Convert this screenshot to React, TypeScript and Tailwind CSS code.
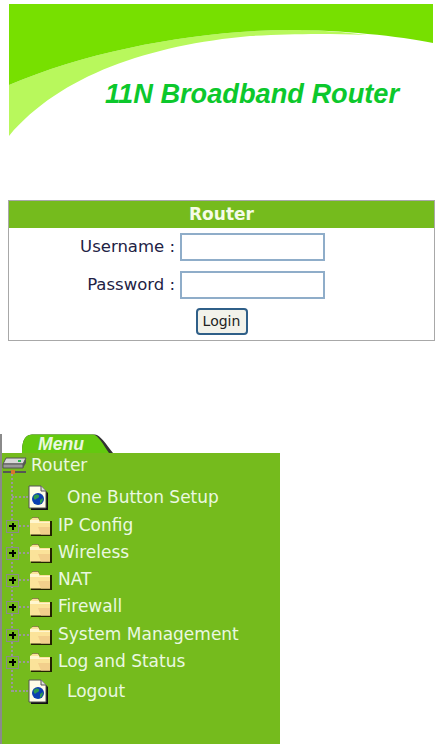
const font = "font-['DejaVu_Sans','Liberation_Sans',sans-serif]";

function Banner() {
  return (
    <div className="relative ml-[9px] mt-[4px] h-[132px] w-[424px]">
      <svg viewBox="9 4 424 132" className="block h-full w-full">
        <path d="M9 85C90 50 200 30 290 30C320 30 345 32 367 35C320 33 290 34 250 36C150 45 60 75 9 136Z" fill="#b8f85c" />
        <path d="M9 4H433V43C400 36 340 30 290 30C200 30 90 50 9 85Z" fill="#77e000" />
      </svg>
      <span className="absolute left-[96px] top-[73px] whitespace-nowrap font-['Liberation_Sans',sans-serif] text-[27.2px] font-bold italic leading-[34px] text-[#0cc82c]">
        11N Broadband Router
      </span>
    </div>
  );
}

function LoginBox() {
  return (
    <div className={`ml-[8px] mt-[64px] h-[141px] w-[427px] border border-[#a8a8a8] bg-white ${font}`}>
      <div className="flex h-[27px] items-center justify-center bg-[#75bb1d] text-[17px] font-bold text-[#f4fbe8]">
        Router
      </div>
      <div className="mt-[5px] flex items-center">
        <label className="w-[166px] text-right text-[16.5px] text-[#222244]">Username :</label>
        <input className="ml-[5px] h-[28px] w-[145px] border-2 border-[#8fadc9] bg-white" />
      </div>
      <div className="mt-[10px] flex items-center">
        <label className="w-[166px] text-right text-[16.5px] text-[#222244]">Password :</label>
        <input className="ml-[5px] h-[28px] w-[145px] border-2 border-[#8fadc9] bg-white" />
      </div>
      <div className="mt-[9px] flex justify-center">
        <button className="flex h-[27px] w-[52px] items-center justify-center rounded-[4px] border-2 border-[#2f5f88] bg-[#f2f2ea] text-[14px] text-[#222222]">
          Login
        </button>
      </div>
    </div>
  );
}

function Folder() {
  return (
    <svg width="23" height="21" viewBox="0 0 23 21" className="shrink-0">
      <path d="M2 20H23V5H11L9 1H4L2 4Z" fill="#222200" />
      <path d="M1 18.5H21V5H11L9 1.5H4L1 4Z" fill="#fbe39a" />
      <path d="M1 4H10V6H21V7H1Z" fill="#fff6cf" />
      <path d="M9 11H21V18.5H12Z" fill="#f2cf8c" />
    </svg>
  );
}

function PageIcon() {
  return (
    <svg width="21" height="25" viewBox="0 0 21 25" className="shrink-0">
      <path d="M3 3H15L20 8V25H3Z" fill="#111111" />
      <path d="M1 1H13L18 6V23H1Z" fill="#fffde8" stroke="#555555" />
      <path d="M13 1V6H18" fill="#dddddd" stroke="#555555" />
      <circle cx="10" cy="14" r="6" fill="#0b3fb0" />
      <path d="M7 10C10 9 12 10 11 12C10 14 8 13 7 15C5 13 5 11 7 10ZM12 15L15 13C15 16 14 18 12 19Z" fill="#2f9a50" />
    </svg>
  );
}

function Plus() {
  return (
    <span className="relative flex h-[13px] w-[13px] shrink-0 items-center justify-center border border-[#8a8a8a] bg-[#75bb1d]">
      <span className="absolute h-[2px] w-[7px] bg-black" />
      <span className="absolute h-[7px] w-[2px] bg-black" />
    </span>
  );
}

function FolderRow({ label, mt }: { label: string; mt: string }) {
  return (
    <div className={`flex h-[22px] items-center ${mt}`}>
      <div className="ml-[4px]">
        <Plus />
      </div>
      <div className="w-[10px] border-t-2 border-dotted border-[#9a9a98]" />
      <Folder />
      <span className="ml-[6px] whitespace-nowrap text-[17px] text-[#eaf8e0]">{label}</span>
    </div>
  );
}

function PageRow({ label, mt }: { label: string; mt: string }) {
  return (
    <div className={`flex h-[26px] items-center ${mt}`}>
      <div className="ml-[10px] w-[16px] border-t-2 border-dotted border-[#9a9a98]" />
      <PageIcon />
      <span className="ml-[18px] whitespace-nowrap pt-[1px] text-[17px] text-[#eaf8e0]">{label}</span>
    </div>
  );
}

function Menu() {
  return (
    <div className={`mt-[93px] w-[280px] ${font}`}>
      <div className="relative h-[19px] border-l-2 border-[#8a8a8a]">
        <svg width="92" height="19" viewBox="0 0 92 19" className="absolute left-[20px] top-0">
          <path d="M0 19C0 8 2 1 10 0.5H73C78 1 84 10 91 19Z" fill="#333333" />
          <path d="M0 19C0 8 2 1 10 0.5H71C76 1 81 10 87 19Z" fill="#63c90f" />
        </svg>
        <span className="absolute left-[36px] top-[-1px] font-['Liberation_Sans',sans-serif] text-[17.6px] font-bold italic leading-[22px] text-[#eaf8e0]">
          Menu
        </span>
      </div>
      <div className="relative h-[291px] border-l-2 border-[#8a8a8a] bg-[#75bb1d]">
        <div className="absolute bottom-[52px] left-[9px] top-[18px] border-l-2 border-dotted border-[#9a9a98]" />
        <div className="relative">
          <div className="flex h-[24px] items-center">
            <svg width="25" height="20" viewBox="0 0 25 20" className="shrink-0">
              <path d="M4 3H24L21 9H1Z" fill="#d8d8d8" stroke="#555555" />
              <path d="M1 9H21V13H1Z" fill="#9a9a9a" stroke="#555555" />
              <path d="M21 9L24 4V8L21 13Z" fill="#555555" />
              <rect x="16" y="5" width="3" height="2" fill="#22c050" />
              <rect x="1" y="16" width="23" height="2" fill="#555555" />
              <rect x="9" y="15" width="4" height="4" fill="#d8772a" />
            </svg>
            <span className="ml-[4px] pt-[1px] text-[17px] text-[#eaf8e0]">Router</span>
          </div>
          <PageRow label="One Button Setup" mt="mt-[7px]" />
          <FolderRow label="IP Config" mt="mt-[5px]" />
          <FolderRow label="Wireless" mt="mt-[5px]" />
          <FolderRow label="NAT" mt="mt-[5px]" />
          <FolderRow label="Firewall" mt="mt-[5px]" />
          <FolderRow label="System Management" mt="mt-[6px]" />
          <FolderRow label="Log and Status" mt="mt-[5px]" />
          <PageRow label="Logout" mt="mt-[5px]" />
        </div>
      </div>
    </div>
  );
}

export default function App() {
  return (
    <div className="h-[744px] w-[444px] overflow-hidden bg-white">
      <Banner />
      <LoginBox />
      <Menu />
    </div>
  );
}
